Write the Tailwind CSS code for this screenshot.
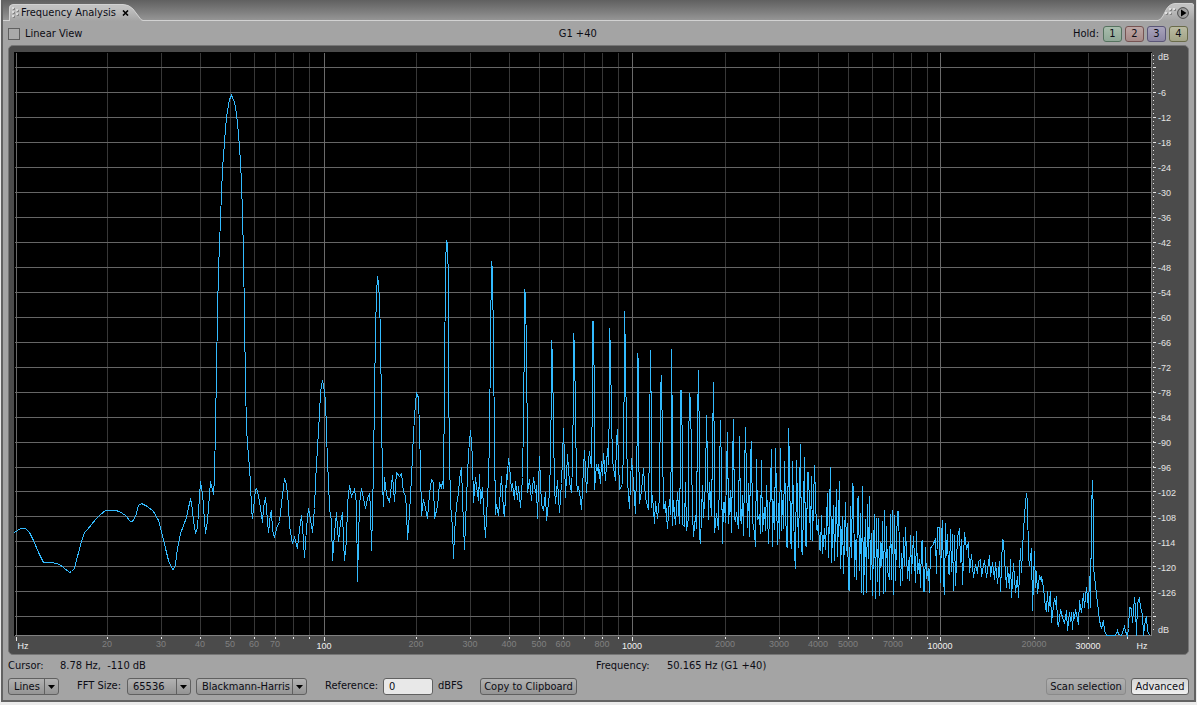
<!DOCTYPE html>
<html lang="en">
<head>
<meta charset="utf-8">
<title>Frequency Analysis</title>
<script src="https://cdn.jsdelivr.net/npm/@tailwindcss/browser@4"></script>
</head>
<body class="bg-[#ebebeb] font-['DejaVu_Sans_Condensed','DejaVu_Sans',sans-serif] text-[11px] leading-4 text-[#0c0c14]">
<div class="flex h-screen min-h-96 flex-col pr-px pb-[3px] pl-px">
<main class="flex min-h-0 flex-1 flex-col border-x-2 border-b-2 border-[#626262] bg-[#a4a4a4]">

  <!-- Tab strip -->
  <header class="flex h-[21px] shrink-0 justify-between border-b border-[#d2d2d2] bg-linear-to-b from-[#606060] to-[#959595] pl-1.5">
    <div class="relative -mb-px flex h-[21px] w-[134px] items-end">
      <svg class="absolute inset-0" width="134" height="21" viewBox="0 0 134 21" aria-hidden="true">
        <defs><linearGradient id="tab" x1="0" y1="0" x2="0" y2="1"><stop offset="0.2" stop-color="#c2c2c2"/><stop offset="1" stop-color="#a4a4a4"/></linearGradient></defs>
        <path d="M0 21V8.500Q0 4.500 4 4.500H114Q120 4.500 124 9L130 17Q132 20.500 134 20.500V21Z" fill="url(#tab)"/>
        <path d="M.5 21V8.500Q.5 4.500 4 4.500H114Q120 4.500 124 9L130 17Q132 20.500 134 20.500" fill="none" stroke="#d2d2d2"/>
        <g fill="#dadada"><path d="M3 7h2v2h-2zM3 11h2v2h-2zM3 15h2v2h-2zM7 9h2v2h-2zM7 13h2v2h-2z"/></g>
        <g fill="#858585"><path d="M5 8h1v2h-2v-1h1zM5 12h1v2h-2v-1h1zM5 16h1v2h-2v-1h1zM9 10h1v2h-2v-1h1zM9 14h1v2h-2v-1h1z"/></g>
      </svg>
      <h1 class="relative ml-3 whitespace-nowrap">Frequency Analysis</h1>
      <button type="button" aria-label="Close tab" class="relative ml-auto mr-3.5 mb-1 flex h-2 w-2 items-center justify-center">
        <svg width="7" height="6" viewBox="0 0 7 6"><path d="M1 .5L6 5.500M6 .5L1 5.500" stroke="#000" stroke-width="1.600"/></svg>
      </button>
    </div>
    <div class="relative -mb-px h-[21px] w-9">
      <svg class="absolute inset-0" width="36" height="21" viewBox="0 0 36 21" aria-hidden="true">
        <path d="M0 21V20.500Q3 20 5 16L8 10Q11 4 17 3.500H34Q36 3.500 36 6V21Z" fill="url(#tab)"/>
        <path d="M0 20.500Q3 20 5 16L8 10Q11 4 17 3.500H34Q35.500 3.500 35.500 6" fill="none" stroke="#d2d2d2"/>
        <g fill="#e0e0e0"><path d="M11 8h2v2h-2zM15 8h2v2h-2zM7 12h2v2h-2zM11 12h2v2h-2z"/></g>
        <g fill="#858585"><path d="M13 9h1v2h-2v-1h1zM17 9h1v2h-2v-1h1zM9 13h1v2h-2v-1h1zM13 13h1v2h-2v-1h1z"/></g>
      </svg>
      <button type="button" aria-label="Panel menu" class="absolute top-[7px] left-[19px] h-3 w-3">
        <svg width="12" height="12" viewBox="0 0 12 12"><circle cx="6" cy="6" r="5.400" fill="#a0a0a0" stroke="#4a4a4a"/><path d="M4 2.500L9.500 6L4 9.500Z" fill="#000"/></svg>
      </button>
    </div>
  </header>

  <!-- View options -->
  <div class="flex h-6 shrink-0 items-center justify-between pt-px pr-1.5 pl-[5px]">
    <label class="flex items-center gap-[5px]"><input type="checkbox" class="h-3 w-3 appearance-none border border-[#606060] bg-[#aaaaaa] checked:bg-[#404040]">Linear View</label>
    <output>G1 +40</output>
    <div class="flex items-center gap-[3px]">
      <span class="pr-px">Hold:</span>
      <button type="button" class="h-4 w-[19px] rounded-[3px] border border-[#56725f] bg-linear-to-b from-[#a9bdad] to-[#8fa796] leading-[14px]">1</button>
      <button type="button" class="h-4 w-[19px] rounded-[3px] border border-[#765453] bg-linear-to-b from-[#bda7a5] to-[#a78a88] leading-[14px]">2</button>
      <button type="button" class="h-4 w-[19px] rounded-[3px] border border-[#5b5677] bg-linear-to-b from-[#a8a3bb] to-[#8c86a4] leading-[14px]">3</button>
      <button type="button" class="h-4 w-[19px] rounded-[3px] border border-[#6a6b4a] bg-linear-to-b from-[#babba2] to-[#a3a487] leading-[14px]">4</button>
    </div>
  </div>

  <!-- Spectrum -->
  <section aria-label="Spectrum" class="mx-[5px] grid min-h-0 flex-1 grid-cols-[1fr_36px] grid-rows-[1fr_18px] overflow-hidden rounded-[5px] border border-[#767676] bg-[#4b4b4b] pt-1.5 pl-[5px] font-['Liberation_Sans',sans-serif] text-[9px] leading-3">
    <div class="relative min-h-0 bg-black">
      <svg class="absolute inset-0 h-full w-full overflow-visible" viewBox="14 52 1138 584" preserveAspectRatio="none" shape-rendering="crispEdges" fill="none" role="img" aria-label="Level in dB against frequency in Hz">
        <g transform="translate(.5 .5)">
          <path id="minor" stroke="#373737"/>
          <path id="rows" stroke="#666666"/>
          <path id="major" stroke="#6a6a6a"/>
          <path d="M14 635H1151V52" stroke="#808080"/>
          <path id="ticks" stroke="#e6e6e6"/>
          <polyline id="trace" stroke="#33bbff" vector-effect="non-scaling-stroke"/>
        </g>
      </svg>
    </div>
    <ol class="flex flex-col pl-1.5 text-[#e4e4e4]" id="levels"></ol>
    <div class="relative col-span-2" id="freqs"></div>
  </section>

  <!-- Readouts and controls -->
  <footer class="shrink-0 px-[5px] pb-[5px]">
    <div class="flex h-[22px] items-center pr-[5px]">
      <div class="flex w-1/2"><span class="w-[52px]">Cursor:</span><output class="whitespace-pre">8.78 Hz,  -110 dB</output></div>
      <div class="flex w-1/2"><span class="w-[71px]">Frequency:</span><output>50.165 Hz (G1 +40)</output></div>
    </div>
    <div class="flex h-[18px] items-center">
      <span class="relative flex">
        <select aria-label="Display style" class="h-[17px] w-[51px] appearance-none rounded-[3px] border border-[#606060] bg-linear-to-b from-[#b2b2b2] to-[#949494] pl-[5px] leading-[15px]"><option>Lines</option></select>
        <svg class="pointer-events-none absolute top-0 right-0" width="15" height="17" viewBox="0 0 15 17"><path d="M.5 0V17" stroke="#606060"/><path d="M4 7h7l-3.500 4z" fill="#000"/></svg>
      </span>
      <label for="fft" class="ml-[18px] w-[50px] whitespace-nowrap">FFT Size:</label>
      <span class="relative flex">
        <select id="fft" class="h-[17px] w-16 appearance-none rounded-[3px] border border-[#606060] bg-linear-to-b from-[#b2b2b2] to-[#949494] pl-[5px] leading-[15px]"><option>65536</option></select>
        <svg class="pointer-events-none absolute top-0 right-0" width="15" height="17" viewBox="0 0 15 17"><path d="M.5 0V17" stroke="#606060"/><path d="M4 7h7l-3.500 4z" fill="#000"/></svg>
      </span>
      <span class="relative ml-[5px] flex">
        <select aria-label="Window function" class="h-[17px] w-[111px] appearance-none rounded-[3px] border border-[#606060] bg-linear-to-b from-[#b2b2b2] to-[#949494] pl-[5px] leading-[15px]"><option>Blackmann-Harris</option></select>
        <svg class="pointer-events-none absolute top-0 right-0" width="15" height="17" viewBox="0 0 15 17"><path d="M.5 0V17" stroke="#606060"/><path d="M4 7h7l-3.500 4z" fill="#000"/></svg>
      </span>
      <label for="ref" class="ml-[18px] w-[58px] whitespace-nowrap">Reference:</label>
      <input id="ref" type="text" value="0" class="h-[17px] w-[50px] rounded-[3px] border border-[#606060] bg-[#e8e8e8] pl-[5px]">
      <span class="ml-[5px] w-[42px]">dBFS</span>
      <button type="button" class="h-[17px] w-[97px] rounded-[3px] border border-[#606060] bg-linear-to-b from-[#b2b2b2] to-[#949494] leading-[15px] whitespace-nowrap">Copy to Clipboard</button>
      <button type="button" class="ml-auto h-[17px] w-20 rounded-[3px] border border-[#8a8a8a] bg-linear-to-b from-[#b0b0b0] to-[#9c9c9c] leading-[15px] whitespace-nowrap">Scan selection</button>
      <button type="button" class="ml-[5px] h-[17px] w-[58px] rounded-[3px] border border-[#606060] bg-linear-to-b from-[#d4d4d4] to-[#f0f0f0] leading-[15px]">Advanced</button>
    </div>
  </footer>
</main>
</div>

<script>
const $ = id => document.getElementById(id);

// Grid columns: x of each frequency line, its label, and whether it is a decade
const minorX = [107,161,200,230,254,275,293,309,416,470,509,539,563,584,602,618,725,779,818,848,872,893,911,927,1034,1088,1127];
const majorX = [16,324,632,940];
const rowY = [67,92,117,142,167,192,217,242,267,292,317,342,367,392,417,442,467,491,516,541,566,591,616];
$('minor').setAttribute('d', minorX.map(x => `M${x} 52V635`).join(''));
$('major').setAttribute('d', majorX.map(x => `M${x} 52V635`).join(''));
$('rows').setAttribute('d', rowY.map(y => `M14 ${y}H1150`).join(''));
let ticks = minorX.map(x => `M${x} 636V638`).join('') + majorX.map(x => `M${x} 636V640`).join('') + rowY.map(y => `M1152 ${y}H1155`).join('');
for (let i = -4; i < 136; i++) { const y = Math.round(67 + i * 4.16); if (y > 50 && y < 634) ticks += `M1152 ${y}h1`; }
$('ticks').setAttribute('d', ticks);

// Level labels
let levels = '<li class="grow-[28] basis-0 leading-[10px]">dB</li>';
for (let v = 6; v <= 126; v += 6) levels += `<li class="flex min-h-0 grow-[25] basis-0 items-center">-${v}</li>`;
levels += '<li class="flex grow-[31] basis-0 items-end">dB</li>';
$('levels').innerHTML = levels;

// Frequency labels
const freqs = [[107,'20'],[161,'30'],[200,'40'],[230,'50'],[254,'60'],[275,'70'],[324,'100',1],[416,'200'],[470,'300'],[509,'400'],[539,'500'],[563,'600'],[602,'800'],[632,'1000',1],[725,'2000'],[779,'3000'],[818,'4000'],[848,'5000'],[893,'7000'],[940,'10000',1],[1034,'20000'],[1088,'30000',1],[23,'Hz',1],[1142,'Hz',1]];
$('freqs').innerHTML = freqs.map(([x, t, on]) => `<span class="absolute -translate-x-1/2 ${on ? 'top-1 text-[#f0f0f0]' : 'top-0.5 text-[#808080]'}" style="left:${((x - 14) / 1174 * 100).toFixed(2)}%">${t}</span>`).join('');

// Measured spectrum
const trace = `14,532 17,530 20,528 25,528 29,532 33,540 38,552 43,562 52,562 59,564 63,567 69,572 71,571 74,568 77,556 81,541 84,532 87,529 95,519 100,514 105,510 115,510 119,511 125,515 130,521 132,521 135,516 138,505 141,503 147,506 153,511 158,520 162,535 165,548 168,560 172,569 173,569 175,564 177,548 180,533 183,525 186,517 188,507 190,499 191,502 193,520 195,533 197,527 200,481 202,493 205,533 207,520 210,481
213,494 214,477 215,425 216,372 217,313 218,270 219,244 220,219 221,192 222,169 223,155 224,142 225,128 226,117 228,105 229,99 231,95 232,97 234,102 236,113 238,134 239,147 240,162 241,183 242,213 243,256 244,317 245,384 246,427 247,444 248,455 249,468 250,482 251,508 252,518 253,508 255,489 256,488 258,495 260,508 262,522 263,507 265,497 266,508 268,532 270,513 271,511 272,530 274,537 276,528 279,521 281,503 284,478 286,484 288,505 289,525 292,543 294,537 297,548 298,537 301,515 302,525 304,557 306,528 308,508 310,519 312,532 314,508 315,482 317,447 319,413 320,392 322,380 323,385 325,400 326,430 327,463 328,480 329,508
331,520 332,560 334,533 336,512 337,528 338,541 340,522 342,512 343,540 344,560 346,540 347,503 349,485 351,496 354,489 356,503 357,581 358,540 359,503 361,488 363,498 365,508 367,498 369,493 370,507 371,550 372,513 373,467 374,395 375,331 376,294 377,276 378,282 379,300 380,335 381,410 382,483 383,506 384,477 386,494 389,502 392,475 394,501 396,472 399,476 401,473 403,492 405,495 406,510 407,539 409,513 411,477 413,433 415,402 416,393 418,397 419,430 420,467 421,515 423,499 425,508 427,518 429,493 431,479 433,482 434,518 437,506 439,483 441,487 442,481 443,488 444,383 445,263 446,241 447,243 448,282 448,377 449,455 450,503 452,528 453,558 454,533 456,505 458,493 459,478 461,467 462,498 464,549 466,498 468,453 470,430 472,457 473,502 475,477 477,493 478,500 479,474 480,503 482,487 483,507 485,537 487,497 488,478 489,439 490,341 491,261 492,270 493,346 494,443 495,514
496,504 498,515 500,490 501,476 503,510 504,516 506,474 506,487 508,458 509,465 511,490 512,483 514,499 515,481 517,499 518,486 520,507 522,477 523,420 524,326 524,289 525,294 526,353 527,450 527,492 529,479 531,500 533,477 535,492 536,485 537,518 539,456 540,483 541,504 543,510 545,492 546,520 549,493 550,457 551,384 551,340 552,356 553,427 554,487 555,503 557,480 559,512 561,483 562,457 563,428 564,459 565,497 567,454 569,482 571,492 572,463 573,388 573,333 574,345 575,413 576,480 577,491 578,486 580,499 581,509 583,467 584,450 586,492 588,460 589,451 591,467 592,389 592,321 593,321 594,405 594,489 596,464 598,473 598,464 600,483 601,461 602,475 603,453 605,480 607,448 608,464 609,396 609,328 610,350 611,416 612,460 615,480 616,440 617,429 618,460 619,489 622,484 623,446 624,360 624,311 625,355 626,435 627,481 629,508 631,458 633,482 635,513 637,424 637,353 638,362 638,437 639,503 641,490 643,468 645,498 648,509 649,439 650,350 651,429 651,507 652,495 654,523 655,501 657,518 659,498 660,388 661,375 662,442 663,508
664,504 665,512 665,501 667,528 669,499 670,514 671,432 671,349 672,437 672,525 673,500 675,524 677,492 679,523 680,456 680,390 681,390 682,457 682,524 684,526 685,482 686,530 688,517 688,450 689,393 690,399 691,457 692,512 693,536 695,515 696,528 697,418 698,370 699,449 699,535 700,543 702,485 703,517 705,483 706,415 707,464 708,519 709,482 711,515 712,445 713,382 714,457 714,532 716,513 718,529 719,473 720,420 721,472 722,543 723,502 724,502 725,522 726,470 727,432 728,523 730,490 731,532 732,464 733,419 734,517 735,521 736,512 738,528 739,436 740,517 741,523 742,495 743,535 744,474 745,427 747,527 748,483 749,536 750,456 751,441 752,521 754,532 755,546 756,459 757,519 759,515 760,533 761,460 762,531 764,507 765,530 766,485 768,543 770,488 771,449 772,546 773,501 774,529 775,448 777,544 778,503 779,538 780,448 781,530 782,500 783,528 784,461 786,546 787,547 788,428 789,461 790,538 791,548 792,461 794,553 795,568 796,460 798,547 799,490 800,444 801,548 802,554 804,457 805,544 806,546 807,472 808,472 810,539 811,476 812,540 814,465 816,529 817,530 818,519 819,549 820,550 821,515 822,553 824,528 825,549 827,493 828,557 830,467 831,562 833,505 834,560 836,489 837,556 839,481 840,568
842,516 843,573 845,502 846,550 847,523 848,588 849,590 850,506 851,557 852,483 853,487 854,576 855,540 856,579 857,500 858,496 859,570 860,513 861,592 862,486 863,594 864,556 865,519 866,592 867,504 868,558 869,496 870,579 871,533 872,595 873,545 874,514 875,598 876,518 877,581 878,518 879,595 880,542 881,565 882,521 883,593 884,510 885,591 886,526 887,570 889,579 890,514 891,579 892,510 893,594 894,515 895,580 896,541 897,511 898,511 899,550 900,585 901,553 902,580 903,537 904,565 905,527 907,578 908,560 909,580 910,535 911,573 913,536 915,582 916,531 917,573 919,559 920,587 921,542 922,540 923,591 924,591 925,547 926,578 928,568 929,592 930,547 932,546 935,538 936,573 937,527 939,527 940,582 941,535 942,520 943,578 944,594 945,523 946,555 947,534 948,573 949,574 950,529 951,571 952,534 953,590 954,535 955,585 957,537 959,528 960,562 961,539 962,584 964,532 966,549 968,542 969,572 971,554 973,577 975,564 977,573 978,561 980,559 981,576 984,560 986,577 989,555 990,576 992,562 994,579 995,562 997,583 999,561 1000,591 1002,539 1003,541 1004,558 1006,587
1007,567 1009,588 1010,559 1011,597 1013,563 1015,592 1017,576 1018,597 1020,548 1021,572 1022,550 1023,529 1025,502 1026,493 1027,502 1028,556 1029,565 1031,548 1032,610 1034,551 1035,587 1036,571 1037,593 1039,575 1041,581 1041,576 1043,587 1045,608 1046,610 1047,591 1048,611 1050,591 1051,622 1053,606 1054,598 1055,604 1056,596 1057,622 1058,626 1060,609 1062,617 1064,623 1066,610 1067,630 1069,612 1070,621 1071,612 1072,629 1073,612 1074,618 1075,609 1078,624 1079,600 1081,612 1083,593 1084,607 1086,587 1088,608 1089,576 1090,607 1091,510 1092,480 1093,517 1093,567 1095,585 1096,594 1098,610 1099,620 1101,628 1103,620 1104,630 1106,635 1115,635 1117,630 1118,634 1121,635 1124,626 1125,631 1127,635 1128,628 1129,607 1131,608 1132,622 1134,597 1135,607 1136,635 1137,603 1139,597 1140,607 1142,614 1143,635 1145,619 1146,617 1147,630 1149,635`;
$('trace').setAttribute('points', trace);
</script>
</body>
</html>
